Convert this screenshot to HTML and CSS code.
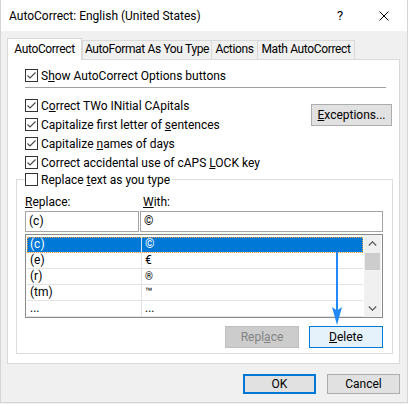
FILE: index.html
```html
<!DOCTYPE html>
<html lang="en">
<head>
<meta charset="utf-8">
<title>AutoCorrect</title>
<link rel="stylesheet" href="styles.css">
</head>
<body>
<div class="dialog">
  <div class="titlebar">
    <span class="title">AutoCorrect: English (United States)</span>
    <span class="help">?</span>
    <span class="close"><svg width="10" height="10" viewBox="0 0 10 10"><path d="M0.5 0.5 L9.5 9.5 M9.5 0.5 L0.5 9.5" stroke="#000" stroke-width="1" fill="none"/></svg></span>
  </div>

  <div class="tabs">
    <div class="tab active">AutoCorrect</div>
    <div class="tab t-format">AutoFormat As You Type</div>
    <div class="tab t-actions">Actions</div>
    <div class="tab t-math">Math AutoCorrect</div>
  </div>

  <div class="panel">
    <label class="check">
      <span class="box"><svg width="11" height="11" viewBox="0 0 11 11"><polyline points="1.5,5.5 4,8 9.5,2.5" fill="none" stroke="#444" stroke-width="1.1"/></svg></span>
      <span>S<u>h</u>ow AutoCorrect Options buttons</span>
    </label>
    <div class="sep"></div>

    <div class="options">
      <div class="opt-list">
        <label class="check">
          <span class="box"><svg width="11" height="11" viewBox="0 0 11 11"><polyline points="1.5,5.5 4,8 9.5,2.5" fill="none" stroke="#444" stroke-width="1.1"/></svg></span>
          <span>C<u>o</u>rrect TWo INitial CApitals</span>
        </label>
        <label class="check">
          <span class="box"><svg width="11" height="11" viewBox="0 0 11 11"><polyline points="1.5,5.5 4,8 9.5,2.5" fill="none" stroke="#444" stroke-width="1.1"/></svg></span>
          <span>Capitalize first letter of <u>s</u>entences</span>
        </label>
        <label class="check">
          <span class="box"><svg width="11" height="11" viewBox="0 0 11 11"><polyline points="1.5,5.5 4,8 9.5,2.5" fill="none" stroke="#444" stroke-width="1.1"/></svg></span>
          <span>Capitalize <u>n</u>ames of days</span>
        </label>
        <label class="check">
          <span class="box"><svg width="11" height="11" viewBox="0 0 11 11"><polyline points="1.5,5.5 4,8 9.5,2.5" fill="none" stroke="#444" stroke-width="1.1"/></svg></span>
          <span>Correct accidental use of cAPS <u>L</u>OCK key</span>
        </label>
      </div>
      <button class="btn exceptions"><u>E</u>xceptions...</button>
    </div>

    <fieldset class="group">
      <legend class="check legend">
        <span class="box"></span>
        <span>Replace <u>t</u>ext as you type</span>
      </legend>
      <div class="labels">
        <span class="lbl-replace"><u>R</u>eplace:</span>
        <span><u>W</u>ith:</span>
      </div>
      <div class="fields">
        <div class="input in-replace">(c)</div>
        <div class="input in-with">©</div>
      </div>
      <div class="listbox">
        <div class="rows">
          <div class="row selected"><span class="c1">(c)</span><span class="c2">©</span></div>
          <div class="row"><span class="c1">(e)</span><span class="c2">€</span></div>
          <div class="row"><span class="c1">(r)</span><span class="c2 small">®</span></div>
          <div class="row"><span class="c1">(tm)</span><span class="c2">™</span></div>
          <div class="row"><span class="c1">...</span><span class="c2">...</span></div>
        </div>
        <div class="scrollbar">
          <span class="sb-btn"><svg width="9" height="5" viewBox="0 0 9 5"><polyline points="0.8,4.5 4.5,0.8 8.2,4.5" fill="none" stroke="#606060" stroke-width="1.3"/></svg></span>
          <span class="thumb"></span>
          <span class="sb-space"></span>
          <span class="sb-btn"><svg width="9" height="5" viewBox="0 0 9 5"><polyline points="0.8,0.5 4.5,4.2 8.2,0.5" fill="none" stroke="#606060" stroke-width="1.3"/></svg></span>
        </div>
      </div>
      <div class="group-buttons">
        <button class="btn disabled">Repl<u>a</u>ce</button>
        <button class="btn hot"><u>D</u>elete</button>
      </div>
    </fieldset>
  </div>

  <div class="footer">
    <button class="btn default">OK</button>
    <button class="btn">Cancel</button>
  </div>

  <svg class="annot-arrow" width="16" height="78" viewBox="0 0 16 78">
    <line x1="7" y1="2" x2="7" y2="64" stroke="#2189f5" stroke-width="2"/>
    <polygon points="2,57 7,60.5 12,57 7,75" fill="#2189f5"/>
  </svg>
</div>
</body>
</html>
```
FILE: styles.css
```css
* {
  box-sizing: border-box;
}

body {
  margin: 0;
  font-family: Roboto, "Liberation Sans", sans-serif;
  font-size: 12px;
  color: #000;
  background: #f0f0f0;
}

u {
  text-decoration: underline;
  text-underline-offset: 1px;
}

.dialog {
  position: relative;
  width: 408px;
  height: 403px;
  background: #f0f0f0;
  border: 1px solid #d4d4d4;
  border-top: none;
  display: flex;
  flex-direction: column;
}

/* title bar */
.titlebar {
  height: 31px;
  flex: none;
  background: #fff;
  display: flex;
  align-items: center;
  padding-left: 8px;
}

.title {
  flex: 1;
}

.help {
  width: 10px;
  text-align: center;
  font-size: 13px;
  margin-right: 34px;
}

.close {
  display: flex;
  margin-right: 18px;
}

/* tabs */
.tabs {
  position: relative;
  z-index: 1;
  display: flex;
  align-items: flex-end;
  height: 22px;
  margin: 7px 0 -1px 6px;
  flex: none;
}

.tab {
  height: 19px;
  margin-bottom: 1px;
  border: 1px solid #d9d9d9;
  border-bottom: none;
  background: #f0f0f0;
  text-align: center;
  line-height: 17px;
  white-space: nowrap;
  letter-spacing: -0.35px;
  overflow: hidden;
}

.tab.active {
  height: 22px;
  margin-bottom: 0;
  background: #fff;
  width: 75px;
  line-height: 16px;
  padding-top: 2px;
}

.t-format {
  width: 130px;
}

.t-actions {
  width: 47px;
  margin-left: -1px;
}

.t-math {
  width: 98px;
  margin-left: -1px;
}

/* panel */
.panel {
  flex: none;
  margin: 0 7px 0 6px;
  background: #fff;
  border: 1px solid #d9d9d9;
  padding: 6px 6px 9px 17px;
}

.check {
  display: flex;
  align-items: center;
  height: 19px;
  white-space: nowrap;
}

.box {
  width: 13px;
  height: 13px;
  flex: none;
  border: 1px solid #333;
  background: #fff;
  margin-right: 3px;
  display: flex;
}

.sep {
  height: 1px;
  background: #a0a0a0;
  margin: 2px 7px 8px 0;
}

.options {
  display: flex;
  justify-content: space-between;
  align-items: flex-start;
}

.btn {
  font-family: inherit;
  font-size: 12px;
  color: #000;
  background: #e1e1e1;
  border: 1px solid #adadad;
  padding: 0;
  margin: 0;
  text-align: center;
}

.exceptions {
  width: 81px;
  height: 22px;
  margin-top: 8px;
  margin-right: 1px;
}

/* group */
.group {
  margin: 1px 0 0 -9px;
  padding: 0 9px 5px 8px;
  border: 1px solid #dcdcdc;
  min-width: 0;
}

.legend {
  height: 13px;
  padding: 0 2px 0 0;
  margin: 0;
}

.labels {
  display: flex;
  height: 14px;
  line-height: 14px;
  margin: 9px 0 2px;
}

.lbl-replace {
  width: 118px;
}

.fields {
  display: flex;
  gap: 1px;
}

.input {
  height: 21px;
  border: 1px solid #a5a5a5;
  background: #fff;
  padding-left: 3px;
  line-height: 19px;
}

.in-replace {
  width: 114px;
}

.in-with {
  width: 243px;
}

.listbox {
  display: flex;
  height: 84px;
  margin-top: 2px;
  border: 1px solid #8a8a8a;
  padding-right: 1px;
  background: #fff;
}

.rows {
  flex: 1;
  padding: 2px 1px 0 1px;
  overflow: hidden;
}

.row {
  display: flex;
  height: 16px;
  line-height: 15px;
  border-bottom: 1px solid #e3e3e3;
}

.c1 {
  width: 115px;
  padding-left: 3px;
  border-right: 1px solid #e3e3e3;
}

.c2 {
  flex: 1;
  padding-left: 3px;
}

.c2.small {
  font-size: 10px;
}

.row.selected {
  background: #0078d7;
  color: #fff;
  outline: 1px dotted #f0a040;
  outline-offset: -1px;
}

.row.selected .c1 {
  border-right-color: #cfe4f7;
}

.scrollbar {
  width: 17px;
  flex: none;
  background: #f0f0f0;
  display: flex;
  flex-direction: column;
}

.sb-btn {
  height: 17px;
  display: flex;
  align-items: center;
  justify-content: center;
}

.thumb {
  height: 17px;
  margin: 1px 1px 0;
  background: #cdcdcd;
}

.sb-space {
  flex: 1;
}

.group-buttons {
  display: flex;
  justify-content: flex-end;
  gap: 10px;
  margin-top: 8px;
}

.group-buttons .btn {
  width: 74px;
  height: 22px;
}

.btn.disabled {
  background: #cccccc;
  border-color: #bfbfbf;
  color: #838383;
}

.btn.hot {
  background: #e5f1fb;
  border-color: #0078d7;
}

/* footer */
.footer {
  display: flex;
  justify-content: flex-end;
  gap: 11px;
  padding: 10px 7px 0 0;
}

.footer .btn {
  width: 73px;
  height: 20px;
}

.btn.default {
  border: 2px solid #0078d7;
}

/* annotation arrow */
.annot-arrow {
  position: absolute;
  left: 329px;
  top: 250px;
}
```
